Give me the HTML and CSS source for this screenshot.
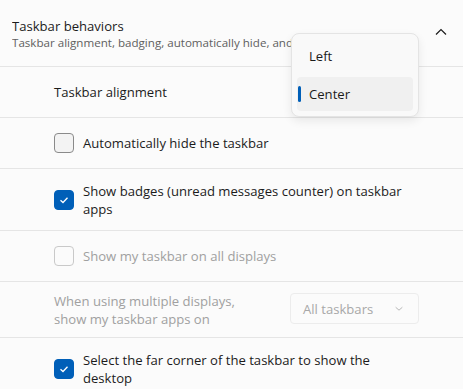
FILE: index.html
```html
<!DOCTYPE html>
<html lang="en">
<head>
    <title>Taskbar behaviors</title>
    <link rel="stylesheet" href="styles.css">
</head>
<body>
<div class="expander">
    <div class="exp-header">
        <div class="exp-text">
            <div class="exp-title">Taskbar behaviors</div>
            <div class="exp-sub">Taskbar alignment, badging, automatically hide, and multiple displays</div>
        </div>
        <svg class="chevron" viewBox="0 0 12 8" fill="none">
            <polyline points="1 6.5 6 1.5 11 6.5"></polyline>
        </svg>
    </div>

    <div class="row row-align">
        <span class="label">Taskbar alignment</span>
    </div>

    <div class="row row-check">
        <span class="box"></span>
        <span class="label">Automatically hide the taskbar</span>
    </div>

    <div class="row row-check row-tall">
        <span class="box checked">
            <svg viewBox="0 0 12 12" fill="none"><polyline points="2.5 6.2 5 8.5 9.5 3.8"></polyline></svg>
        </span>
        <span class="label">Show badges (unread messages counter) on taskbar apps</span>
    </div>

    <div class="row row-check disabled">
        <span class="box"></span>
        <span class="label">Show my taskbar on all displays</span>
    </div>

    <div class="row row-combo disabled">
        <span class="label">When using multiple displays,<br>show my taskbar apps on</span>
        <div class="combo">
            <span>All taskbars</span>
            <svg viewBox="0 0 12 8" fill="none"><polyline points="2 2.5 6 6 10 2.5"></polyline></svg>
        </div>
    </div>

    <div class="row row-check row-tall">
        <span class="box checked">
            <svg viewBox="0 0 12 12" fill="none"><polyline points="2.5 6.2 5 8.5 9.5 3.8"></polyline></svg>
        </span>
        <span class="label">Select the far corner of the taskbar to show the desktop</span>
    </div>
</div>

<div class="menu">
    <div class="menu-item">Left</div>
    <div class="menu-item selected">Center</div>
</div>
</body>
</html>
```

FILE: styles.css
```css
* {
    margin: 0;
    padding: 0;
    box-sizing: border-box;
}

body {
    font-family: "Open Sans", "Noto Sans", sans-serif;
    font-size: 13.1px;
    color: #1b1b1b;
    background: #fbfbfb;
    overflow: hidden;
}

.expander {
    width: 100%;
}

.exp-header {
    display: flex;
    align-items: center;
    justify-content: space-between;
    height: 67px;
    padding: 2px 16px 0 12px;
    border-bottom: 1px solid #e5e5e5;
}

/* the open menu covers the rest of the description */
.exp-text {
    width: 279px;
    overflow: hidden;
    white-space: nowrap;
}

.exp-title {
    font-size: 13.1px;
    line-height: 18px;
}

.exp-sub {
    font-size: 11.6px;
    line-height: 16px;
    color: #606060;
}

.chevron {
    width: 12px;
    height: 8px;
    stroke: #1b1b1b;
    stroke-width: 1.2;
    margin-bottom: 4px;
}

.row {
    display: flex;
    align-items: center;
    padding-left: 54px;
    border-bottom: 1px solid #e5e5e5;
}

.label {
    line-height: 18px;
}

.row-align {
    height: 51px;
}

.row-check {
    height: 51px;
    gap: 9px;
    padding-right: 52px;
}

.row-tall {
    height: 62px;
}

.box {
    flex: none;
    width: 20px;
    height: 20px;
    border: 1px solid #8a8a8a;
    border-radius: 4px;
    background: #f3f3f3;
    display: flex;
    align-items: center;
    justify-content: center;
}

.box.checked {
    background: #005fb8;
    border-color: #005fb8;
}

.box svg {
    width: 12px;
    height: 12px;
    stroke: #ffffff;
    stroke-width: 1.3;
}

.disabled .label {
    color: #a0a0a0;
}

.disabled .box {
    border-color: #c9c9c9;
    background: #fbfbfb;
}

.row-combo {
    height: 56px;
    justify-content: space-between;
    padding-right: 44px;
}

.combo {
    display: flex;
    align-items: center;
    justify-content: space-between;
    width: 129px;
    height: 31px;
    padding: 0 14px 0 12px;
    border: 1px solid #ececec;
    border-radius: 4px;
    background: #fbfbfb;
    color: #a8a8a8;
    margin-bottom: 2px;
}

.combo svg {
    width: 10px;
    height: 7px;
    stroke: #b0b0b0;
    stroke-width: 1.1;
}

.menu {
    position: absolute;
    left: 291px;
    top: 33px;
    width: 128px;
    height: 84px;
    padding: 4px 5px;
    background: #f9f9f9;
    border: 1px solid #e4e4e4;
    border-radius: 8px;
    box-shadow: 0 4px 10px rgba(0, 0, 0, 0.08);
}

.menu-item {
    position: relative;
    height: 34px;
    margin-top: 1px;
    padding-left: 12px;
    display: flex;
    align-items: center;
    border-radius: 4px;
}

.menu-item.selected {
    margin-top: 4px;
    background: #f0f0f0;
}

.menu-item.selected::before {
    content: "";
    position: absolute;
    left: 1px;
    top: 9px;
    width: 3px;
    height: 16px;
    border-radius: 2px;
    background: #005fb8;
}
```
